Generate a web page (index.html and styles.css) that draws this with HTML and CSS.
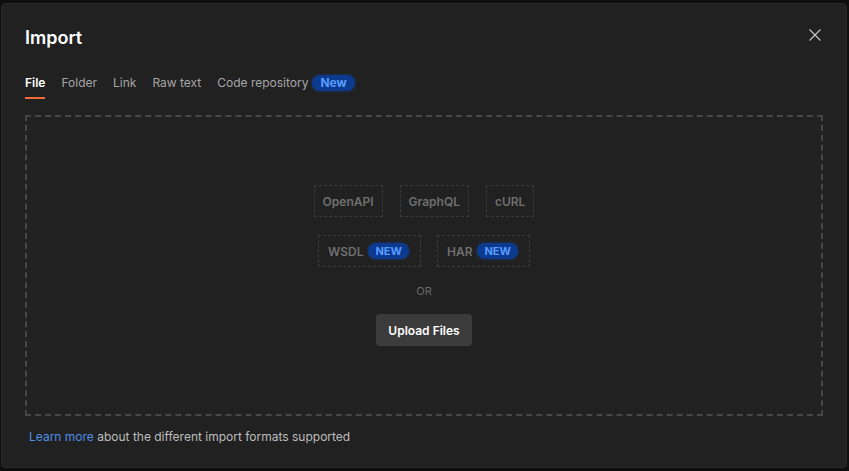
FILE: index.html
```html
<!DOCTYPE html>
<html>
<head>
<meta charset="utf-8">
<link rel="stylesheet" href="styles.css">
</head>
<body>
<div class="modal">
  <div class="header">
    <h1 class="title">Import</h1>
    <button class="close" aria-label="Close">
      <svg width="14" height="14" viewBox="0 0 14 14"><path d="M1.5 1.5 L12.5 12.5 M12.5 1.5 L1.5 12.5" stroke="#c8c8c8" stroke-width="1.1" fill="none"/></svg>
    </button>
  </div>
  <nav class="tabs">
    <span class="tab active">File</span>
    <span class="tab">Folder</span>
    <span class="tab">Link</span>
    <span class="tab">Raw text</span>
    <span class="tab">Code repository <span class="badge badge-tab">New</span></span>
  </nav>
  <div class="dropzone">
    <div class="row">
      <span class="fmt">OpenAPI</span>
      <span class="fmt">GraphQL</span>
      <span class="fmt">cURL</span>
    </div>
    <div class="row row2">
      <span class="fmt fmt-wide">WSDL <span class="badge">NEW</span></span>
      <span class="fmt fmt-wide">HAR <span class="badge">NEW</span></span>
    </div>
    <div class="or">OR</div>
    <button class="upload">Upload Files</button>
  </div>
  <p class="footer"><a class="link">Learn more</a> about the different import formats supported</p>
</div>
</body>
</html>
```

FILE: styles.css
```css
* { box-sizing: border-box; }
html, body { margin: 0; padding: 0; }
body {
  background: #0e0e0e;
  font-family: Inter, "Noto Sans", "Liberation Sans", sans-serif;
  width: 849px;
  height: 471px;
  overflow: hidden;
}
.modal {
  margin: 3px 2px 0 1px;
  width: 846px;
  height: 465px;
  background: #212121;
  border: 1px solid #2a2a2a;
  border-radius: 4px;
  padding: 22px 23px 0 23px;
  display: flex;
  flex-direction: column;
}
.header {
  display: flex;
  justify-content: space-between;
  align-items: flex-start;
  height: 24px;
}
.title {
  margin: 0;
  font-size: 18px;
  line-height: 24px;
  font-weight: 600;
  color: #ffffff;
}
.close {
  background: none;
  border: none;
  padding: 0;
  margin: 2px 1px 0 0;
  width: 14px;
  height: 14px;
  display: flex;
}
.tabs {
  display: flex;
  gap: 16px;
  margin-top: 23px;
  align-items: flex-start;
}
.tab {
  font-size: 12px;
  line-height: 20px;
  color: #a6a6a6;
  padding-bottom: 4px;
  border-bottom: 2px solid transparent;
  display: flex;
  align-items: center;
  gap: 4px;
  white-space: nowrap;
}
.tab.active {
  color: #ffffff;
  font-weight: 600;
  border-bottom-color: #f26b3a;
}
.badge {
  display: inline-block;
  background: #0b3a8f;
  color: #5a9cff;
  font-weight: 700;
  font-size: 11px;
  line-height: 16px;
  height: 16px;
  padding: 0 7px;
  border-radius: 8px;
  box-shadow: 0 0 3px rgba(30, 90, 220, 0.45);
}
.badge-tab {
  font-size: 12px;
  padding: 0 8px;
}
.dropzone {
  margin-top: 16px;
  height: 301px;
  border: 2px dashed #474747;
  display: flex;
  flex-direction: column;
  align-items: center;
  justify-content: center;
}
.row {
  display: flex;
  gap: 17px;
}
.row2 {
  margin-top: 18px;
  gap: 16px;
}
.fmt {
  height: 32px;
  padding: 0 8px;
  border: 1px dashed #3b3b3b;
  color: #6f6f6f;
  font-size: 12px;
  font-weight: 600;
  display: flex;
  align-items: center;
  gap: 5px;
}
.fmt-wide {
  padding: 0 11px 0 9px;
}
.or {
  margin-top: 16px;
  font-size: 11px;
  line-height: 16px;
  color: #6a6a6a;
}
.upload {
  margin-top: 15px;
  height: 32px;
  padding: 0 12px;
  background: #3b3b3b;
  border: none;
  border-radius: 4px;
  color: #ffffff;
  font-family: inherit;
  font-size: 12px;
  font-weight: 600;
}
.footer {
  margin: 13px 0 0 4px;
  font-size: 12px;
  line-height: 16px;
  color: #bdbdbd;
}
.link {
  color: #4d8fe6;
}
```
